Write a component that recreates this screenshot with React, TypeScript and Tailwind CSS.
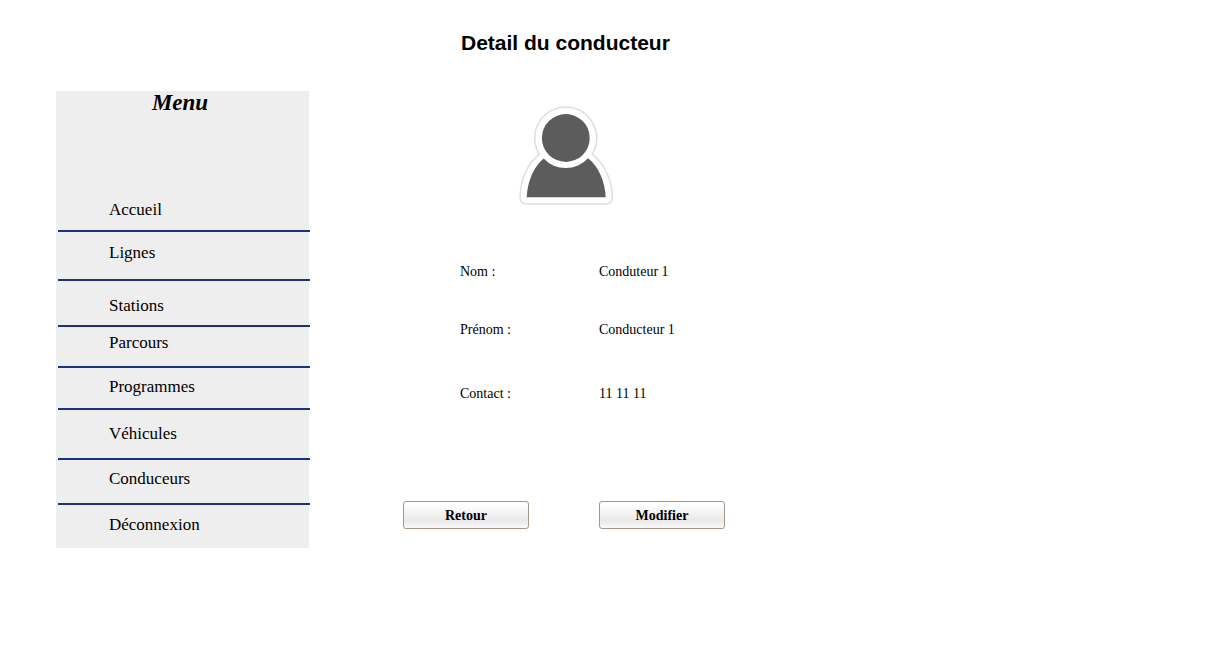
const menuItems = [
  { label: "Accueil", spacing: "pt-[85px] pb-[10px]" },
  { label: "Lignes", spacing: "pt-[11px] pb-[16px]" },
  { label: "Stations", spacing: "pt-[15px] pb-[9px]" },
  { label: "Parcours", spacing: "pt-[6px] pb-[13px]" },
  { label: "Programmes", spacing: "pt-[9px] pb-[11px]" },
  { label: "Véhicules", spacing: "pt-[14px] pb-[14px]" },
  { label: "Conduceurs", spacing: "pt-[9px] pb-[14px]" },
  { label: "Déconnexion", spacing: "pt-[10px] pb-[13px]" },
];

const fields = [
  { label: "Nom :", value: "Conduteur 1", spacing: "" },
  { label: "Prénom :", value: "Conducteur 1", spacing: "mt-[38px]" },
  { label: "Contact :", value: "11 11 11", spacing: "mt-[44px]" },
];

function Sidebar() {
  return (
    <nav aria-label="Menu" className="mt-[91px] w-[253px] shrink-0 bg-[#eeeeee]">
      <h2 className="pr-[5px] text-center text-[23px] leading-[24px] font-bold italic">Menu</h2>
      <ul>
        {menuItems.map((item) => (
          <li
            key={item.label}
            className="-mr-px ml-0.5 border-b-2 border-[#1a3281] last:border-b-0"
          >
            <a href="#" className={`block pl-[51px] text-[17px] leading-[20px] ${item.spacing}`}>
              {item.label}
            </a>
          </li>
        ))}
      </ul>
    </nav>
  );
}

function Avatar() {
  return (
    <svg
      viewBox="0 0 96 102"
      className="mt-[50px] ml-[114px] h-[102px] w-[96px]"
      role="img"
      aria-label="Conducteur"
    >
      <path
        d="M21.3 49.3 A31 31 0 1 1 74.2 49.2 C86 58 94 75 94.5 92 Q94.5 99 87.5 99 H9 Q2 99 2 92 C2.5 75 9.5 58 21.3 49.3 Z"
        fill="#fff"
        stroke="#dedede"
        strokeWidth="1.5"
      />
      <circle cx="47.8" cy="33" r="23.9" fill="#5c5c5c" />
      <path
        d="M25.7 53.5 A30 30 0 0 0 70 53.2 C80.5 61 87.2 77 87.7 92.3 H8.7 C9.5 77 15 62.5 25.7 53.5 Z"
        fill="#5c5c5c"
      />
    </svg>
  );
}

function ActionButton({ children }: { children: string }) {
  return (
    <button
      type="button"
      className="h-[28px] w-[126px] rounded-[3px] border border-[#a39685] bg-linear-to-b from-white from-10% via-[#e9e9e9] via-70% to-[#fafafa] pt-0.5 text-[14px] leading-[20px] font-bold"
    >
      {children}
    </button>
  );
}

export default function App() {
  return (
    <div className="flex min-h-screen items-start bg-white pl-[56px] font-['Liberation_Serif',serif] text-black">
      <Sidebar />
      <main className="grow pt-[31px] pl-[94px]">
        <div className="pl-px">
          <h1 className="pl-[57px] font-['Liberation_Sans',sans-serif] text-[21px] leading-[24px] font-bold">
            Detail du conducteur
          </h1>
          <Avatar />
        </div>
        <dl className="mt-[55px] pl-[57px] text-[14px] leading-[20px]">
          {fields.map((field) => (
            <div key={field.label} className={`flex ${field.spacing}`}>
              <dt className="w-[139px]">{field.label}</dt>
              <dd>{field.value}</dd>
            </div>
          ))}
        </dl>
        <div className="mt-[97px] flex gap-[70px]">
          <ActionButton>Retour</ActionButton>
          <ActionButton>Modifier</ActionButton>
        </div>
      </main>
    </div>
  );
}
